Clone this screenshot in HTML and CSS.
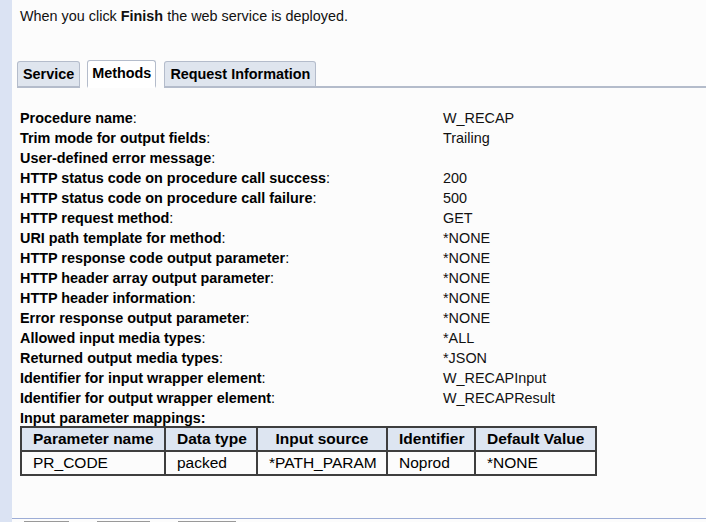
FILE: index.html
```html
<!DOCTYPE html>
<html lang="en">
<head>
    <meta charset="UTF-8">
    <title>Deploy Web Service</title>
    <link rel="stylesheet" href="styles.css">
</head>
<body>

<div class="page">
    <div class="side-strip"></div>

    <div class="main">
        <p class="intro">When you click <b>Finish</b> the web service is deployed.</p>

        <div class="tabs">
            <span class="tab">Service</span>
            <span class="tab active">Methods</span>
            <span class="tab">Request Information</span>
            <span class="tab-rest"></span>
        </div>

        <div class="props">
            <div class="row"><span class="label"><b>Procedure name</b>:</span><span class="value">W_RECAP</span></div>
            <div class="row"><span class="label"><b>Trim mode for output fields</b>:</span><span class="value">Trailing</span></div>
            <div class="row"><span class="label"><b>User-defined error message</b>:</span><span class="value"></span></div>
            <div class="row"><span class="label"><b>HTTP status code on procedure call success</b>:</span><span class="value">200</span></div>
            <div class="row"><span class="label"><b>HTTP status code on procedure call failure</b>:</span><span class="value">500</span></div>
            <div class="row"><span class="label"><b>HTTP request method</b>:</span><span class="value">GET</span></div>
            <div class="row"><span class="label"><b>URI path template for method</b>:</span><span class="value">*NONE</span></div>
            <div class="row"><span class="label"><b>HTTP response code output parameter</b>:</span><span class="value">*NONE</span></div>
            <div class="row"><span class="label"><b>HTTP header array output parameter</b>:</span><span class="value">*NONE</span></div>
            <div class="row"><span class="label"><b>HTTP header information</b>:</span><span class="value">*NONE</span></div>
            <div class="row"><span class="label"><b>Error response output parameter</b>:</span><span class="value">*NONE</span></div>
            <div class="row"><span class="label"><b>Allowed input media types</b>:</span><span class="value">*ALL</span></div>
            <div class="row"><span class="label"><b>Returned output media types</b>:</span><span class="value">*JSON</span></div>
            <div class="row"><span class="label"><b>Identifier for input wrapper element</b>:</span><span class="value">W_RECAPInput</span></div>
            <div class="row"><span class="label"><b>Identifier for output wrapper element</b>:</span><span class="value">W_RECAPResult</span></div>
            <div class="row last"><span class="label"><b>Input parameter mappings:</b></span></div>
        </div>

        <table class="mappings">
            <colgroup>
                <col class="c-name">
                <col class="c-type">
                <col class="c-source">
                <col class="c-id">
                <col class="c-default">
            </colgroup>
            <tr>
                <th>Parameter name</th>
                <th>Data type</th>
                <th>Input source</th>
                <th>Identifier</th>
                <th>Default Value</th>
            </tr>
            <tr>
                <td>PR_CODE</td>
                <td>packed</td>
                <td>*PATH_PARAM</td>
                <td>Noprod</td>
                <td>*NONE</td>
            </tr>
        </table>

        <div class="footer">
            <span class="btn b1"></span>
            <span class="btn b2"></span>
            <span class="btn b3"></span>
        </div>
    </div>
</div>

</body>
</html>
```

FILE: styles.css
```css
body {
    margin: 0;
    font-family: "Liberation Sans", Arial, sans-serif;
    font-size: 14.4px;
    color: #000;
    background-color: #fcfcfc;
}
.page {
    display: flex;
    height: 522px;
    overflow: hidden;
}
.side-strip {
    width: 12px;
    flex-shrink: 0;
    background-color: #dbe3f3;
}
.main {
    flex: 1;
    display: flex;
    flex-direction: column;
}
.intro {
    margin: 0;
    padding: 8px 0 0 8px;
    line-height: 16px;
    color: #111;
}
.tabs {
    display: flex;
    align-items: flex-end;
    margin-top: 37px;
    padding-left: 5px;
    height: 27px;
}
.tab {
    font-weight: bold;
    background-color: #dfe5ee;
    border: 1px solid #b4bccb;
    border-bottom: 2px solid #b4bccb;
    border-radius: 3px 3px 0 0;
    padding: 0 5px;
    height: 24px;
    line-height: 24px;
    margin-right: 8px;
    color: #000;
}
.tab.active {
    background-color: #fff;
    border-bottom: 2px solid #fff;
    height: 25px;
    line-height: 25px;
    margin-left: -1px;
    padding: 0 4px;
}
.tab-rest {
    flex: 1;
    border-bottom: 2px solid #b4bccb;
    margin-left: -8px;
}
.props {
    padding: 20px 0 0 8px;
}
.row {
    display: flex;
    height: 20px;
    line-height: 20px;
}
.row.last {
    height: 18px;
}
.label {
    width: 423px;
    color: #000;
}
.value {
    color: #111;
}
.mappings {
    margin: 0 0 0 8px;
    width: 575px;
    table-layout: fixed;
    border-collapse: collapse;
    border: 2px solid #3e3e3e;
}
.mappings th, .mappings td {
    border: 2px solid #3e3e3e;
    height: 22px;
    padding: 0 11px;
    text-align: left;
    font-size: 15.5px;
    white-space: nowrap;
}
.mappings th {
    background-color: #dde5f1;
    font-weight: bold;
    text-align: center;
}
.c-name { width: 144px; }
.c-type { width: 92px; }
.c-source { width: 130px; }
.c-id { width: 88px; }
.c-default { width: 121px; }
.footer {
    margin-top: auto;
    border-top: 1px solid #9dadd6;
    height: 3px;
    position: relative;
}
.btn {
    position: absolute;
    top: 2px;
    height: 3px;
    border-top: 1px solid #999;
    background-color: #ddd;
}
.b1 { left: 12px; width: 45px; }
.b2 { left: 85px; width: 53px; }
.b3 { left: 166px; width: 58px; }
```
